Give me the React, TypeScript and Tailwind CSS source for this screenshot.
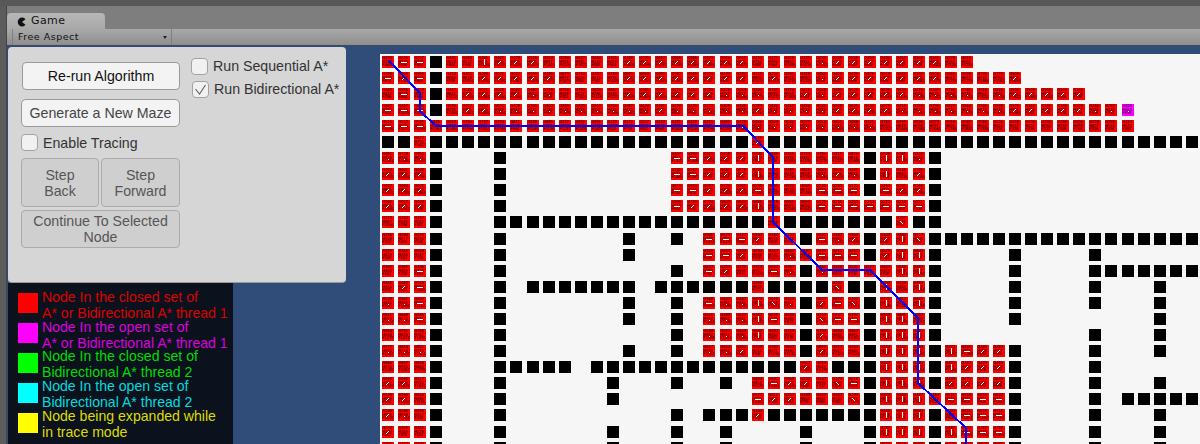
import React from "react";

const MAZE: string[] = [
  "0:2R;3B;4:36R",
  "0:2R;3B;4:39R",
  "0:2R;3B;4:43R",
  "0:2R;3B;4:45R;46M",
  "0:46R",
  "0:1B;2R;3:22B;23R;24:50B",
  "0:2R;3B;7B;18:29R;30B;31:33R;34B",
  "0:2R;3B;7B;18:29R;30B;31:33R;34B",
  "0:2R;3B;7B;18:29R;30B;31:33R;34B",
  "0:2R;3B;7B;18:33R;34B",
  "0:2R;3B;7:23B;24R;25:31B;32R;33:34B",
  "0:2R;3B;7B;15B;18B;20:25R;26B;27:29R;30B;31:33R;34:50B",
  "0:2R;3B;7B;15B;20:29R;30B;31:33R;34B;39B;44B",
  "0:2R;3B;7B;18B;20:25R;26B;27:33R;34B;39B;44:50B",
  "0:2R;3B;7B;9:15B;17:22B;23R;24:27B;28R;29:30B;31:33R;34B;39B;44B;48B",
  "0:2R;3B;7B;15B;18B;20:25R;26B;27:29R;30B;31:33R;34B;39B;44B;48B",
  "0:2R;3B;7B;15B;18B;20:25R;26B;27:29R;30B;31:33R;34B;39B;48B",
  "0:2R;3B;7B;18B;20:25R;26B;27:29R;30B;31:33R;34B;44B;48B",
  "0:2R;3B;7B;15B;18B;20:25R;26B;27:29R;30B;31:33R;34B;35:38R;39B;44B;48B",
  "0:2R;3B;7:11B;13:25B;26:27R;28:30B;31:33R;34B;35:38R;39B;44B",
  "0:2R;3B;7B;14B;18B;21B;23:29R;30B;31:33R;34B;35:38R;39B;44B;48B",
  "0:2R;3B;7B;14B;23:29R;30B;31:38R;39B;44B;46:50B",
  "0:2R;3B;7B;18B;20:22B;23R;24:30B;31:33R;34B;35:38R;39B;44B;48B",
  "0:2R;3B;7B;14B;18B;21B;26B;30B;31:33R;34B;35:38R;39B;44B;48B",
  "0:2R;3B;7B;14B;18B;21B;26B;30B;31:33R;34B;35:38R;39B;44B;48B",
];

const ARROWS: string[] = [
  "1:2-;6|;7:9/;15:22/;27.;28:34/",
  "0-;1/;2-;6:10/;15:22/;24/;27.;28:34/;39/",
  "1-;5:8/;9:10.;15:20/;21:23.;26/;27.;28:32/;33:36.;38.;39:43/",
  "0:2-;5:6/;7:16.;17/;18:22.;23/;24:27.;28:31/;32:38.;39:43/;44:46.",
  "0:2-;22:30.",
  "23/",
  "0:2.;18:19-;20:22/;23|;31:32|;33.",
  "0:2/;18:19-;20:22/;23|;27.;28/;29.;31|;33/",
  "0:2/;18:19-;20:22/;23-;27:29-;31-;32:33/",
  "0:2/;18-;19:22/;23|;27:30-;31:33-",
  "32\\",
  "20:22-;23/;27-;28.;29/;31/;32|;33\\",
  "20:21-;22/;25.;27:29-;31/;32:33|",
  "2-;20-;21/;24-;25.;27.;32:33|",
  "1/;2-;28\\;31|;33|",
  "0:1.;2-;20-;21:22.;23|;24\\;25.;27/;28-;29\\;31|;33|",
  "0:1.;2-;20:22.;23|;24-;27\\;28:29-;31:32|",
  "20:22.;23|;27/;31:33|",
  "0:2.;20:21.;22/;27/;31:33|;35|;36-;37:38/",
  "26/;31:33|;35|;36:38/",
  "0:1/;24-;25:26/;28\\;29-;31:33|;35:38/",
  "0:1/;23-;24:25/;29\\;31:33|;35:38-",
  "0/;1.;23/;31:33|;36:38-",
  "0/;31:33|;35|;36:38-",
  "31:33|;35|;36:38-",
];

function expand(spec: string): Record<number, string> {
  const out: Record<number, string> = {};
  spec.split(";").forEach((part) => {
    const m = part.match(/^(\d+)(?::(\d+))?(.)$/);
    if (!m) return;
    const a = Number(m[1]);
    const b = m[2] ? Number(m[2]) : a;
    for (let i = a; i <= b; i++) out[i] = m[3];
  });
  return out;
}

function Arrow({ kind }: { kind: string }) {
  const d: Record<string, string> = {
    "-": "M3 6.5H9",
    "|": "M6.5 3V9",
    "/": "M4 8L7 5",
    "\\": "M4 5L7 8",
    ".": "M6 7H7",
  };
  if (!d[kind]) return null;
  return (
    <svg className="absolute left-0 top-0" width="12" height="12" viewBox="0 0 12 12" shapeRendering="crispEdges">
      <path d={d[kind]} stroke="#ffffff" strokeWidth="1" fill="none" />
    </svg>
  );
}

function Node({ r, c, kind, arrow }: { r: number; c: number; kind: string; arrow?: string }) {
  const g = ((r + 1) * 83 + c * 37) % 900 + 100;
  const h = ((c + 3) * 59 + r * 71) % 900 + 100;
  return (
    <div
      className={`relative flex h-3 w-3 flex-col overflow-hidden whitespace-nowrap pt-[1px] font-['Liberation_Sans',sans-serif] text-[3.8px] leading-[3.6px] tracking-[0.1px] text-black ${
        kind === "M" ? "bg-[#ff00ff]" : "bg-[#ff0000]"
      }`}
    >
      <span>G{g}</span>
      <span>H{h}</span>
      <span className="mt-auto">F{g + h}</span>
      {arrow ? <Arrow kind={arrow} /> : null}
    </div>
  );
}

function Maze() {
  return (
    <div className="relative min-w-0 flex-1 overflow-hidden bg-[#f6f6f6] pl-[2px] pt-[2px]">
      <div className="absolute left-0 top-0 h-[2px] w-[2px] bg-white" />
      <div className="grid grid-cols-[repeat(8,16px)_17px_repeat(11,16px)_17px_repeat(11,16px)_17px_repeat(12,16px)_17px_repeat(5,16px)] grid-rows-[repeat(10,16px)_17px_repeat(11,16px)_17px_16px_16px]">
        {MAZE.flatMap((spec, r) => {
          const cells = expand(spec);
          const arrows = expand(ARROWS[r]);
          return Array.from({ length: 51 }, (_, c) => {
            const k = cells[c];
            if (k === "B") return <div key={`${r}-${c}`} className="h-3 w-3 bg-black" />;
            if (k) return <Node key={`${r}-${c}`} r={r} c={c} kind={k} arrow={arrows[c]} />;
            return <div key={`${r}-${c}`} />;
          });
        })}
      </div>
      <svg className="absolute left-0 top-0" width="820" height="390" viewBox="0 0 820 390" shapeRendering="crispEdges">
        <polyline
          points="9,7 40,39 40,57 56,72 363,72 393,103 393,168 442,216 490,216 538,264 538,329 586,374 586,390"
          fill="none"
          stroke="#0000ff"
          strokeWidth="2"
        />
      </svg>
    </div>
  );
}

function Checkbox({ checked }: { checked?: boolean }) {
  return (
    <span className="flex h-[17px] w-[17px] shrink-0 items-center justify-center rounded-[4px] border border-[#a2a2a2] bg-[#f1f1f1]">
      {checked ? (
        <svg width="13" height="13" viewBox="0 0 13 13">
          <path d="M1.5 6L5.5 11L11.5 2" fill="none" stroke="#666666" strokeWidth="1.2" />
        </svg>
      ) : null}
    </span>
  );
}

const LEGEND = [
  { swatch: "bg-[#ff0000]", text: "text-[#dc0000]", shift: "mt-[-2px]", a: "Node In the closed set of", b: "A* or Bidirectional A* thread 1" },
  { swatch: "bg-[#ff00ff]", text: "text-[#dc00dc]", shift: "mt-[-2px]", a: "Node In the open set of", b: "A* or Bidirectional A* thread 1" },
  { swatch: "bg-[#00ff00]", text: "text-[#00dc00]", shift: "mt-[-3px]", a: "Node In the closed set of", b: "Bidirectional A* thread 2" },
  { swatch: "bg-[#00ffff]", text: "text-[#00dcdc]", shift: "mt-[-3px]", a: "Node In the open set of", b: "Bidirectional A* thread 2" },
  { swatch: "bg-[#ffff00]", text: "text-[#dcdc00]", shift: "mt-[-3px]", a: "Node being expanded while", b: "in trace mode" },
];

const disabledBtn =
  "flex items-center justify-center rounded-[4px] border border-[#ababab] bg-[#cfcfcf] text-center leading-4 text-[#565656]";

export default function App() {
  return (
    <div className="flex h-[444px] w-[1200px] flex-col overflow-hidden bg-[#555555] font-['Liberation_Sans',sans-serif] text-[14.2px]">
      <div className="h-[6px] shrink-0 bg-[#585858]" />
      <div className="flex min-h-0 flex-1">
        <div className="w-[7px] shrink-0 border-r border-[#444444] bg-[#5c5c5c]" />
        <div className="flex min-w-0 flex-1 flex-col">
          <div className="flex h-[23px] shrink-0 items-end bg-[#7e7e7e]">
            <div className="flex h-4 w-[98px] items-center gap-[5px] rounded-t-[4px] bg-gradient-to-b from-[#b7b7b7] to-[#a9a9a9] pl-[10px] pt-[1px] font-['DejaVu_Sans',sans-serif] text-[11px] tracking-[0.4px] text-[#111111]">
              <svg width="9" height="10" viewBox="0 0 9 10">
                <path d="M8.5 2.2A4.4 4.4 0 1 0 8.5 7.8L5 5Z" fill="#111111" />
              </svg>
              <span>Game</span>
            </div>
          </div>
          <div className="flex h-4 shrink-0 bg-gradient-to-b from-[#a9a9a9] to-[#8e8e8e] pl-[5px]">
            <div className="flex w-[160px] items-center justify-between border-x border-[#808080] pl-[5px] pr-[4px] pt-[1px] font-['DejaVu_Sans',sans-serif] text-[9.5px] tracking-[0.5px] text-[#111111]">
              <span>Free Aspect</span>
              <span className="mb-[1px] h-0 w-0 border-x-[2px] border-t-[3px] border-x-transparent border-t-[#222222]" />
            </div>
          </div>
          <div className="h-[1px] shrink-0 bg-[#3a4a62]" />
          <div className="flex min-h-0 flex-1 bg-[#2f4d78]">
            <div className="flex w-[373px] shrink-0 flex-col pl-[1px] pt-[1px]">
              <div className="flex h-[236px] w-[338px] shrink-0 rounded-[4px] border-b border-[#999999] bg-[#d6d6d6] pl-[13px] pt-[15px]">
                <div className="flex w-[159px] shrink-0 flex-col">
                  <div className="ml-[1px] flex h-[28px] items-center justify-center rounded-[4px] border border-[#9a9a9a] bg-[#f3f3f3] pt-[2px] text-[#111111]">
                    Re-run Algorithm
                  </div>
                  <div className="mt-[9px] flex h-[28px] items-center justify-center rounded-[5px] border border-[#9a9a9a] bg-[#f3f3f3] pt-[2px] text-[#454545]">
                    Generate a New Maze
                  </div>
                  <div className="mt-[7px] flex h-[17px] items-center gap-[5px] text-[#333333]">
                    <Checkbox />
                    <span className="pt-[2px]">Enable Tracing</span>
                  </div>
                  <div className="mt-[7px] flex h-[49px] gap-[2px]">
                    <div className={`${disabledBtn} w-[78px]`}>
                      Step
                      <br />
                      Back
                    </div>
                    <div className={`${disabledBtn} w-[79px]`}>
                      Step
                      <br />
                      Forward
                    </div>
                  </div>
                  <div className={`${disabledBtn} mt-[3px] h-[38px]`}>
                    Continue To Selected
                    <br />
                    Node
                  </div>
                </div>
                <div className="ml-[11px] mt-[-5px] flex flex-col text-[#333333]">
                  <div className="flex h-[18px] items-center gap-[5px]">
                    <Checkbox />
                    <span className="pt-[1px]">Run Sequential A*</span>
                  </div>
                  <div className="ml-[1px] mt-[5px] flex h-[18px] items-center gap-[5px]">
                    <Checkbox checked />
                    <span className="pt-[2px]">Run Bidirectional A*</span>
                  </div>
                </div>
              </div>
              <div className="flex w-[225px] flex-1 flex-col bg-[#0b121e] pl-[10px] pt-[10px] text-[14.1px]">
                {LEGEND.map((l) => (
                  <div key={l.a + l.b} className="flex h-[30px] shrink-0 gap-[4px]">
                    <div className={`h-5 w-5 shrink-0 ${l.swatch}`} />
                    <div className={`${l.shift} flex flex-col gap-1 whitespace-nowrap leading-3 ${l.text}`}>
                      <div>{l.a}</div>
                      <div>{l.b}</div>
                    </div>
                  </div>
                ))}
              </div>
            </div>
            <div className="flex min-w-0 flex-1 flex-col pt-[8px]">
              <Maze />
            </div>
          </div>
        </div>
      </div>
    </div>
  );
}
